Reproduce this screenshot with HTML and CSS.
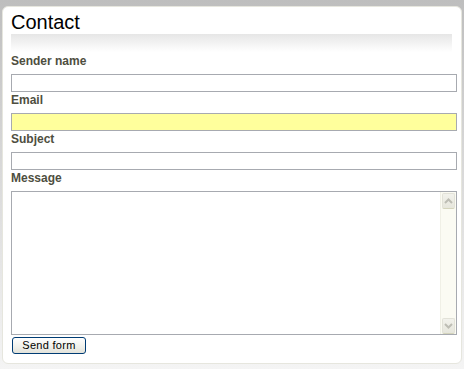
FILE: index.html
```html
<!DOCTYPE html>
<html lang="en">
<head>
    <meta charset="UTF-8">
    <meta name="viewport" content="width=device-width, initial-scale=1.0">
    <title>Contact</title>
    <link rel="stylesheet" href="styles.css">
</head>
<body>
    <div class="panel">
        <h1>Contact</h1>
        <form class="contact-form">
            <label for="sender">Sender name</label>
            <input type="text" id="sender" class="field">
            <label for="email">Email</label>
            <input type="text" id="email" class="field field-active">
            <label for="subject">Subject</label>
            <input type="text" id="subject" class="field">
            <label for="message">Message</label>
            <div class="message-box">
                <textarea id="message"></textarea>
                <div class="scrollbar">
                    <span class="scroll-btn">
                        <svg width="9" height="6" viewBox="0 0 9 6"><polyline points="1,5 4.5,1.5 8,5" fill="none" stroke="#bdbdb4" stroke-width="2"/></svg>
                    </span>
                    <span class="scroll-btn">
                        <svg width="9" height="6" viewBox="0 0 9 6"><polyline points="1,1 4.5,4.5 8,1" fill="none" stroke="#bdbdb4" stroke-width="2"/></svg>
                    </span>
                </div>
            </div>
            <button type="button" class="send-button">Send form</button>
        </form>
    </div>
</body>
</html>
```

FILE: styles.css
```css
html {
    height: 100%;
    background: linear-gradient(#bebebe, #d6d6d6 40%, #f4f4f4);
}
body {
    margin: 0;
    padding: 6px 2px 5px 2px;
    font-family: "Liberation Sans", Arial, sans-serif;
}
.panel {
    height: 358px;
    box-sizing: border-box;
    background-color: #fff;
    border: 1px solid #e6e6de;
    border-radius: 6px;
    padding: 3px 4px 9px 8px;
}
h1 {
    margin: 0 5px 0 0;
    font-size: 20px;
    font-weight: normal;
    line-height: 24px;
    color: #000;
    padding-bottom: 18px;
    background: linear-gradient(#e6e6e6, #fff) no-repeat bottom / 100% 18px;
}
.contact-form {
    display: flex;
    flex-direction: column;
    align-items: flex-start;
    padding-top: 1px;
}
.contact-form label {
    display: block;
    font-size: 12px;
    font-weight: bold;
    line-height: 16px;
    color: #4e4e40;
    margin-bottom: 5px;
}
.field {
    display: block;
    width: 100%;
    height: 18px;
    box-sizing: border-box;
    margin: 0;
    border: 1px solid #a7aab0;
    background-color: #fff;
    padding: 0 3px;
}
.field-active {
    background-color: #ffff9c;
}
.message-box {
    display: flex;
    width: 100%;
    height: 144px;
    box-sizing: border-box;
    border: 1px solid #a7aab0;
}
.message-box textarea {
    flex: 1;
    border: none;
    resize: none;
    margin: 0;
    padding: 2px;
    outline: none;
    font-family: "Liberation Sans", Arial, sans-serif;
}
.scrollbar {
    width: 16px;
    display: flex;
    flex-direction: column;
    justify-content: space-between;
    background-color: #fbfbf3;
    border-left: 1px solid #f0f0e6;
    padding: 1px 1px 0 1px;
    box-sizing: border-box;
}
.scroll-btn {
    display: flex;
    align-items: center;
    justify-content: center;
    height: 16px;
    box-sizing: border-box;
    background: linear-gradient(#f2f2ec, #e6e6dc);
    border: 1px solid #e2e2d8;
    border-bottom-color: #d4d4bc;
    border-radius: 2px;
}
.send-button {
    margin: 2px 0 0 1px;
    width: 74px;
    height: 17px;
    box-sizing: border-box;
    padding: 0;
    border: 1px solid #003c74;
    border-radius: 3px;
    background: linear-gradient(#ffffff, #f0f0ea 60%, #e2e2da);
    font-family: "Liberation Sans", Arial, sans-serif;
    font-size: 11px;
    letter-spacing: 0.3px;
    color: #000;
    line-height: 15px;
}
```
